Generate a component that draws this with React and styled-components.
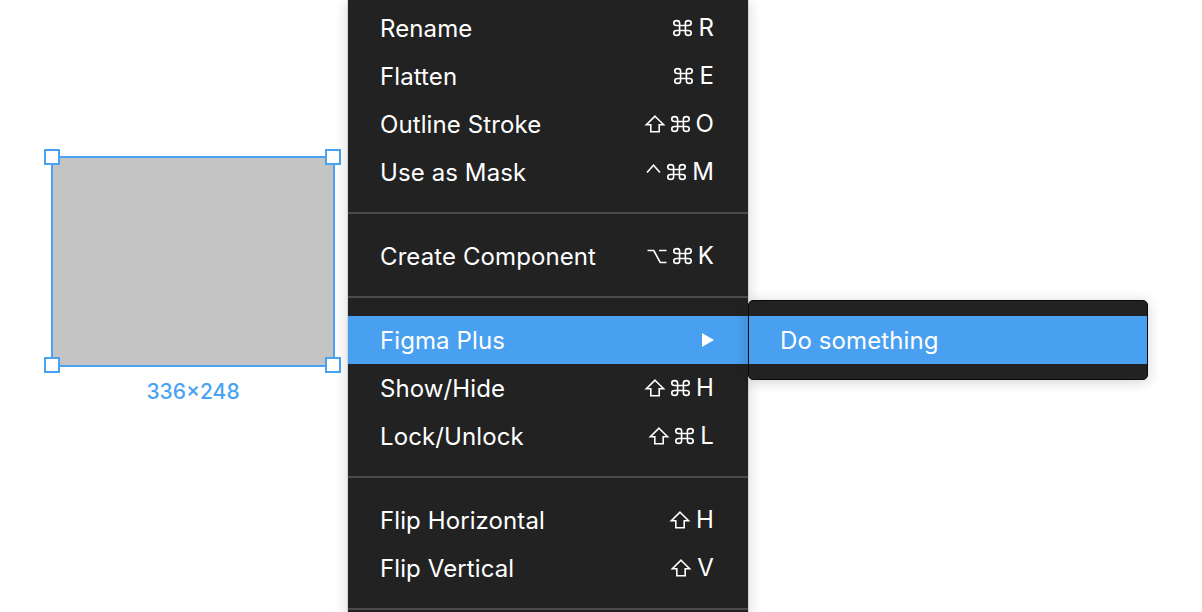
import React from 'react';
import styled, { createGlobalStyle } from 'styled-components';

const GlobalStyle = createGlobalStyle`
  html, body {
    margin: 0;
    padding: 0;
    background: #ffffff;
    overflow: hidden;
  }
  body {
    font-family: "Inter", "Noto Sans", "DejaVu Sans", sans-serif;
    -webkit-font-smoothing: antialiased;
  }
`;

const BLUE = '#4aa3f2';

const Page = styled.div`
  display: flex;
  width: 1202px;
  height: 612px;
  overflow: hidden;
  background: #fff;
`;

const Canvas = styled.div`
  width: 348px;
  flex-shrink: 0;
  padding: 156px 0 0 51px;
  box-sizing: border-box;
`;

const Frame = styled.div`
  display: flex;
  flex-direction: column;
  align-items: center;
  width: 284px;
`;

const Selection = styled.div`
  position: relative;
  width: 284px;
  height: 211px;
  box-sizing: border-box;
  border: 2px solid ${BLUE};
  background: #c4c4c4;
`;

const Handle = styled.span`
  position: absolute;
  width: 16px;
  height: 16px;
  box-sizing: border-box;
  border: 2px solid ${BLUE};
  background: #fff;
  ${p => (p.$v === 'top' ? 'top: -9px;' : 'bottom: -8px;')}
  ${p => (p.$h === 'left' ? 'left: -9px;' : 'right: -8px;')}
`;

const SizeLabel = styled.div`
  margin-top: 12px;
  font-size: 21px;
  line-height: 26px;
  font-weight: 500;
  color: ${BLUE};
`;

const Menu = styled.div`
  position: relative;
  width: 400px;
  flex-shrink: 0;
  padding-top: 4px;
  background: #222222;
  color: #fff;
  box-shadow: 0 2px 14px rgba(0, 0, 0, 0.18), 0 0 0 0.5px rgba(0, 0, 0, 0.2);
  align-self: flex-start;
  height: 640px;
  box-sizing: border-box;
`;

const Row = styled.div`
  position: relative;
  display: flex;
  align-items: center;
  justify-content: space-between;
  height: 48px;
  padding: 0 34px 0 32px;
  font-size: 24px;
  letter-spacing: 0.1px;
  background: ${p => (p.$active ? '#4aa0f0' : 'transparent')};
`;

const Separator = styled.div`
  height: 2px;
  margin: 16px 0 18px;
  background: #4b4b4b;
`;

const Keys = styled.div`
  display: flex;
  align-items: center;
  gap: 6px;
`;

const Key = styled.span`
  display: inline-block;
  font-size: 24px;
  line-height: 1;
`;

const Glyph = styled.svg`
  display: block;
  width: ${p => p.$w}px;
  height: ${p => p.$h}px;
  fill: none;
  stroke: #fff;
  stroke-width: 1.6;
  overflow: visible;

  path {
    vector-effect: non-scaling-stroke;
  }
`;

const Arrow = styled.svg`
  width: 12px;
  height: 14px;
  display: block;
`;

const Submenu = styled.div`
  position: absolute;
  left: 100%;
  top: -16px;
  width: 400px;
  box-sizing: border-box;
  padding: 15px 0;
  background: #222222;
  border: 1px solid #0b0b0b;
  border-radius: 5px;
  box-shadow: 0 2px 14px rgba(0, 0, 0, 0.18);
  overflow: hidden;
`;

const SubRow = styled.div`
  display: flex;
  align-items: center;
  height: 48px;
  padding: 0 32px 0 31px;
  font-size: 24px;
  letter-spacing: 0.1px;
  background: #4aa0f0;
`;

function CmdIcon() {
  return (
    <Glyph $w={19} $h={16} viewBox="2.2 2.2 19.6 19.6" preserveAspectRatio="none" aria-label="⌘">
      <path d="M15 6v12a3 3 0 1 0 3-3H6a3 3 0 1 0 3 3V6a3 3 0 1 0-3 3h12a3 3 0 1 0-3-3" />
    </Glyph>
  );
}

function ShiftIcon() {
  return (
    <Glyph $w={20} $h={18} viewBox="0 0 20 18" aria-label="⇧">
      <path d="M10 1.2 L18.6 9.8 H14.2 V16.8 H5.8 V9.8 H1.4 Z" />
    </Glyph>
  );
}

function OptIcon() {
  return (
    <Glyph $w={20} $h={15} viewBox="0 0 20 15" aria-label="⌥">
      <path d="M0.5 1.5 H6.8 L13.2 13.5 H19.5 M12 1.5 H19.5" />
    </Glyph>
  );
}

function CtrlIcon() {
  return (
    <Glyph $w={15} $h={18} viewBox="0 0 15 18" aria-label="⌃">
      <path d="M1 9.5 L7.5 2.2 L14 9.5" />
    </Glyph>
  );
}

const icons = { cmd: CmdIcon, shift: ShiftIcon, opt: OptIcon, ctrl: CtrlIcon };

const groups = [
  [
    { label: 'Rename', keys: ['cmd', 'R'] },
    { label: 'Flatten', keys: ['cmd', 'E'] },
    { label: 'Outline Stroke', keys: ['shift', 'cmd', 'O'] },
    { label: 'Use as Mask', keys: ['ctrl', 'cmd', 'M'] },
  ],
  [{ label: 'Create Component', keys: ['opt', 'cmd', 'K'] }],
  [
    { label: 'Figma Plus', submenu: true },
    { label: 'Show/Hide', keys: ['shift', 'cmd', 'H'] },
    { label: 'Lock/Unlock', keys: ['shift', 'cmd', 'L'] },
  ],
  [
    { label: 'Flip Horizontal', keys: ['shift', 'H'] },
    { label: 'Flip Vertical', keys: ['shift', 'V'] },
  ],
];

function MenuItem({ item }) {
  if (item.submenu) {
    return (
      <Row $active>
        <span>{item.label}</span>
        <Arrow viewBox="0 0 12 14">
          <polygon points="0,0 12,7 0,14" fill="#fff" />
        </Arrow>
        <Submenu>
          <SubRow>Do something</SubRow>
        </Submenu>
      </Row>
    );
  }
  return (
    <Row>
      <span>{item.label}</span>
      <Keys>
        {item.keys.map((k, i) => {
          const Icon = icons[k];
          return Icon ? <Icon key={i} /> : <Key key={i}>{k}</Key>;
        })}
      </Keys>
    </Row>
  );
}

export default function App() {
  return (
    <>
      <GlobalStyle />
      <Page>
        <Canvas>
          <Frame>
            <Selection>
              <Handle $v="top" $h="left" />
              <Handle $v="top" $h="right" />
              <Handle $v="bottom" $h="left" />
              <Handle $v="bottom" $h="right" />
            </Selection>
            <SizeLabel>336×248</SizeLabel>
          </Frame>
        </Canvas>
        <Menu>
          {groups.map((group, gi) => (
            <React.Fragment key={gi}>
              {group.map(item => (
                <MenuItem key={item.label} item={item} />
              ))}
              <Separator />
            </React.Fragment>
          ))}
        </Menu>
      </Page>
    </>
  );
}
